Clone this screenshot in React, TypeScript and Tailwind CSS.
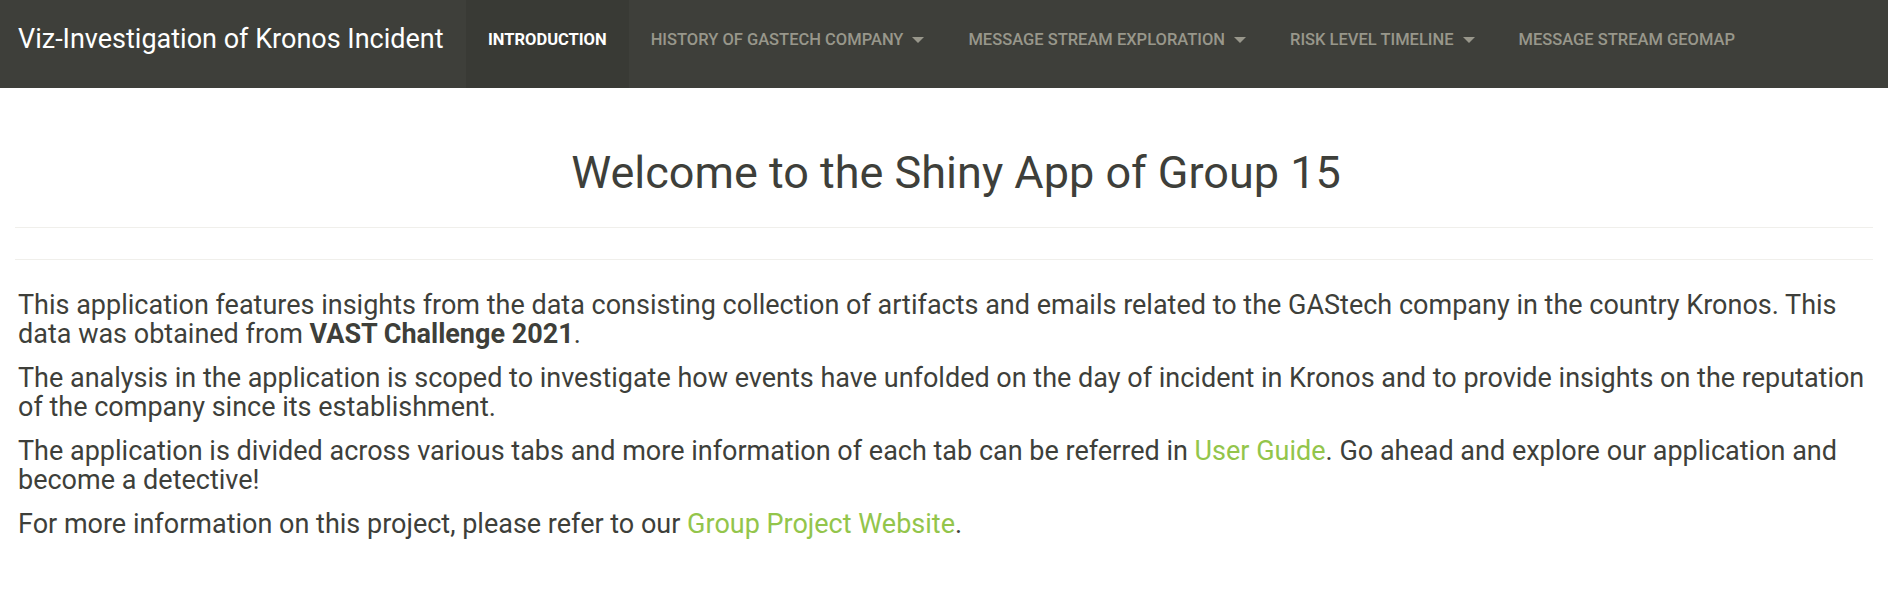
import React from 'react';

const navItems = [
  { label: 'Introduction', active: true, caret: false },
  { label: 'History of GAStech Company', active: false, caret: true },
  { label: 'Message Stream Exploration', active: false, caret: true },
  { label: 'Risk Level Timeline', active: false, caret: true },
  { label: 'Message Stream Geomap', active: false, caret: false },
];

const Caret = () => (
  <span className="inline-block w-0 h-0 ml-[9px] border-t-[6px] border-t-[#98978b] border-x-[6px] border-x-transparent align-middle" />
);

const App: React.FC = () => {
  return (
    <div className="min-h-screen bg-white font-[Roboto,sans-serif] text-[#3e3f3a]">
      {/* Navbar */}
      <header className="h-[88px] bg-[#3e3f3a] flex items-stretch">
        <div className="w-[466px] pl-[18px] pb-[9px] flex items-center text-white text-[27px] whitespace-nowrap">
          Viz-Investigation of Kronos Incident
        </div>
        <nav className="flex items-stretch">
          {navItems.map((item) => (
            <div
              key={item.label}
              className={`px-[22px] pb-[8px] flex items-center uppercase text-[16.5px] whitespace-nowrap ${
                item.active ? 'bg-[#393a35] text-white font-bold' : 'text-[#98978b] font-medium'
              }`}
            >
              {item.label}
              {item.caret && <Caret />}
            </div>
          ))}
        </nav>
      </header>

      {/* Content */}
      <main className="px-[15px]">
        <div className="pt-[62px] pb-[31px] border-b border-[#f0efeb]">
          <h1 className="text-center pl-[24px] text-[45px] leading-[46px] font-normal">
            Welcome to the Shiny App of Group 15
          </h1>
        </div>
        <hr className="mt-[31px] border-0 border-t border-[#f0efeb]" />

        <div className="pt-[31px] pl-[3px] text-[27px] leading-[29px]">
          <p className="mb-[15px]">
            This application features insights from the data consisting collection of artifacts and emails related to
            the GAStech company in the country Kronos. This data was obtained from <b className="font-bold">VAST Challenge 2021</b>.
          </p>
          <p className="mb-[15px]">
            The analysis in the application is scoped to investigate how events have unfolded on the day of incident in
            Kronos and to provide insights on the reputation of the company since its establishment.
          </p>
          <p className="mb-[15px]">
            The application is divided across various tabs and more information of each tab can be referred in{' '}
            <a className="text-[#93c54b]">User Guide</a>. Go ahead and explore our application and become a detective!
          </p>
          <p className="mb-[15px]">
            For more information on this project, please refer to our{' '}
            <a className="text-[#93c54b]">Group Project Website</a>.
          </p>
        </div>
      </main>
    </div>
  );
};

export default App;
